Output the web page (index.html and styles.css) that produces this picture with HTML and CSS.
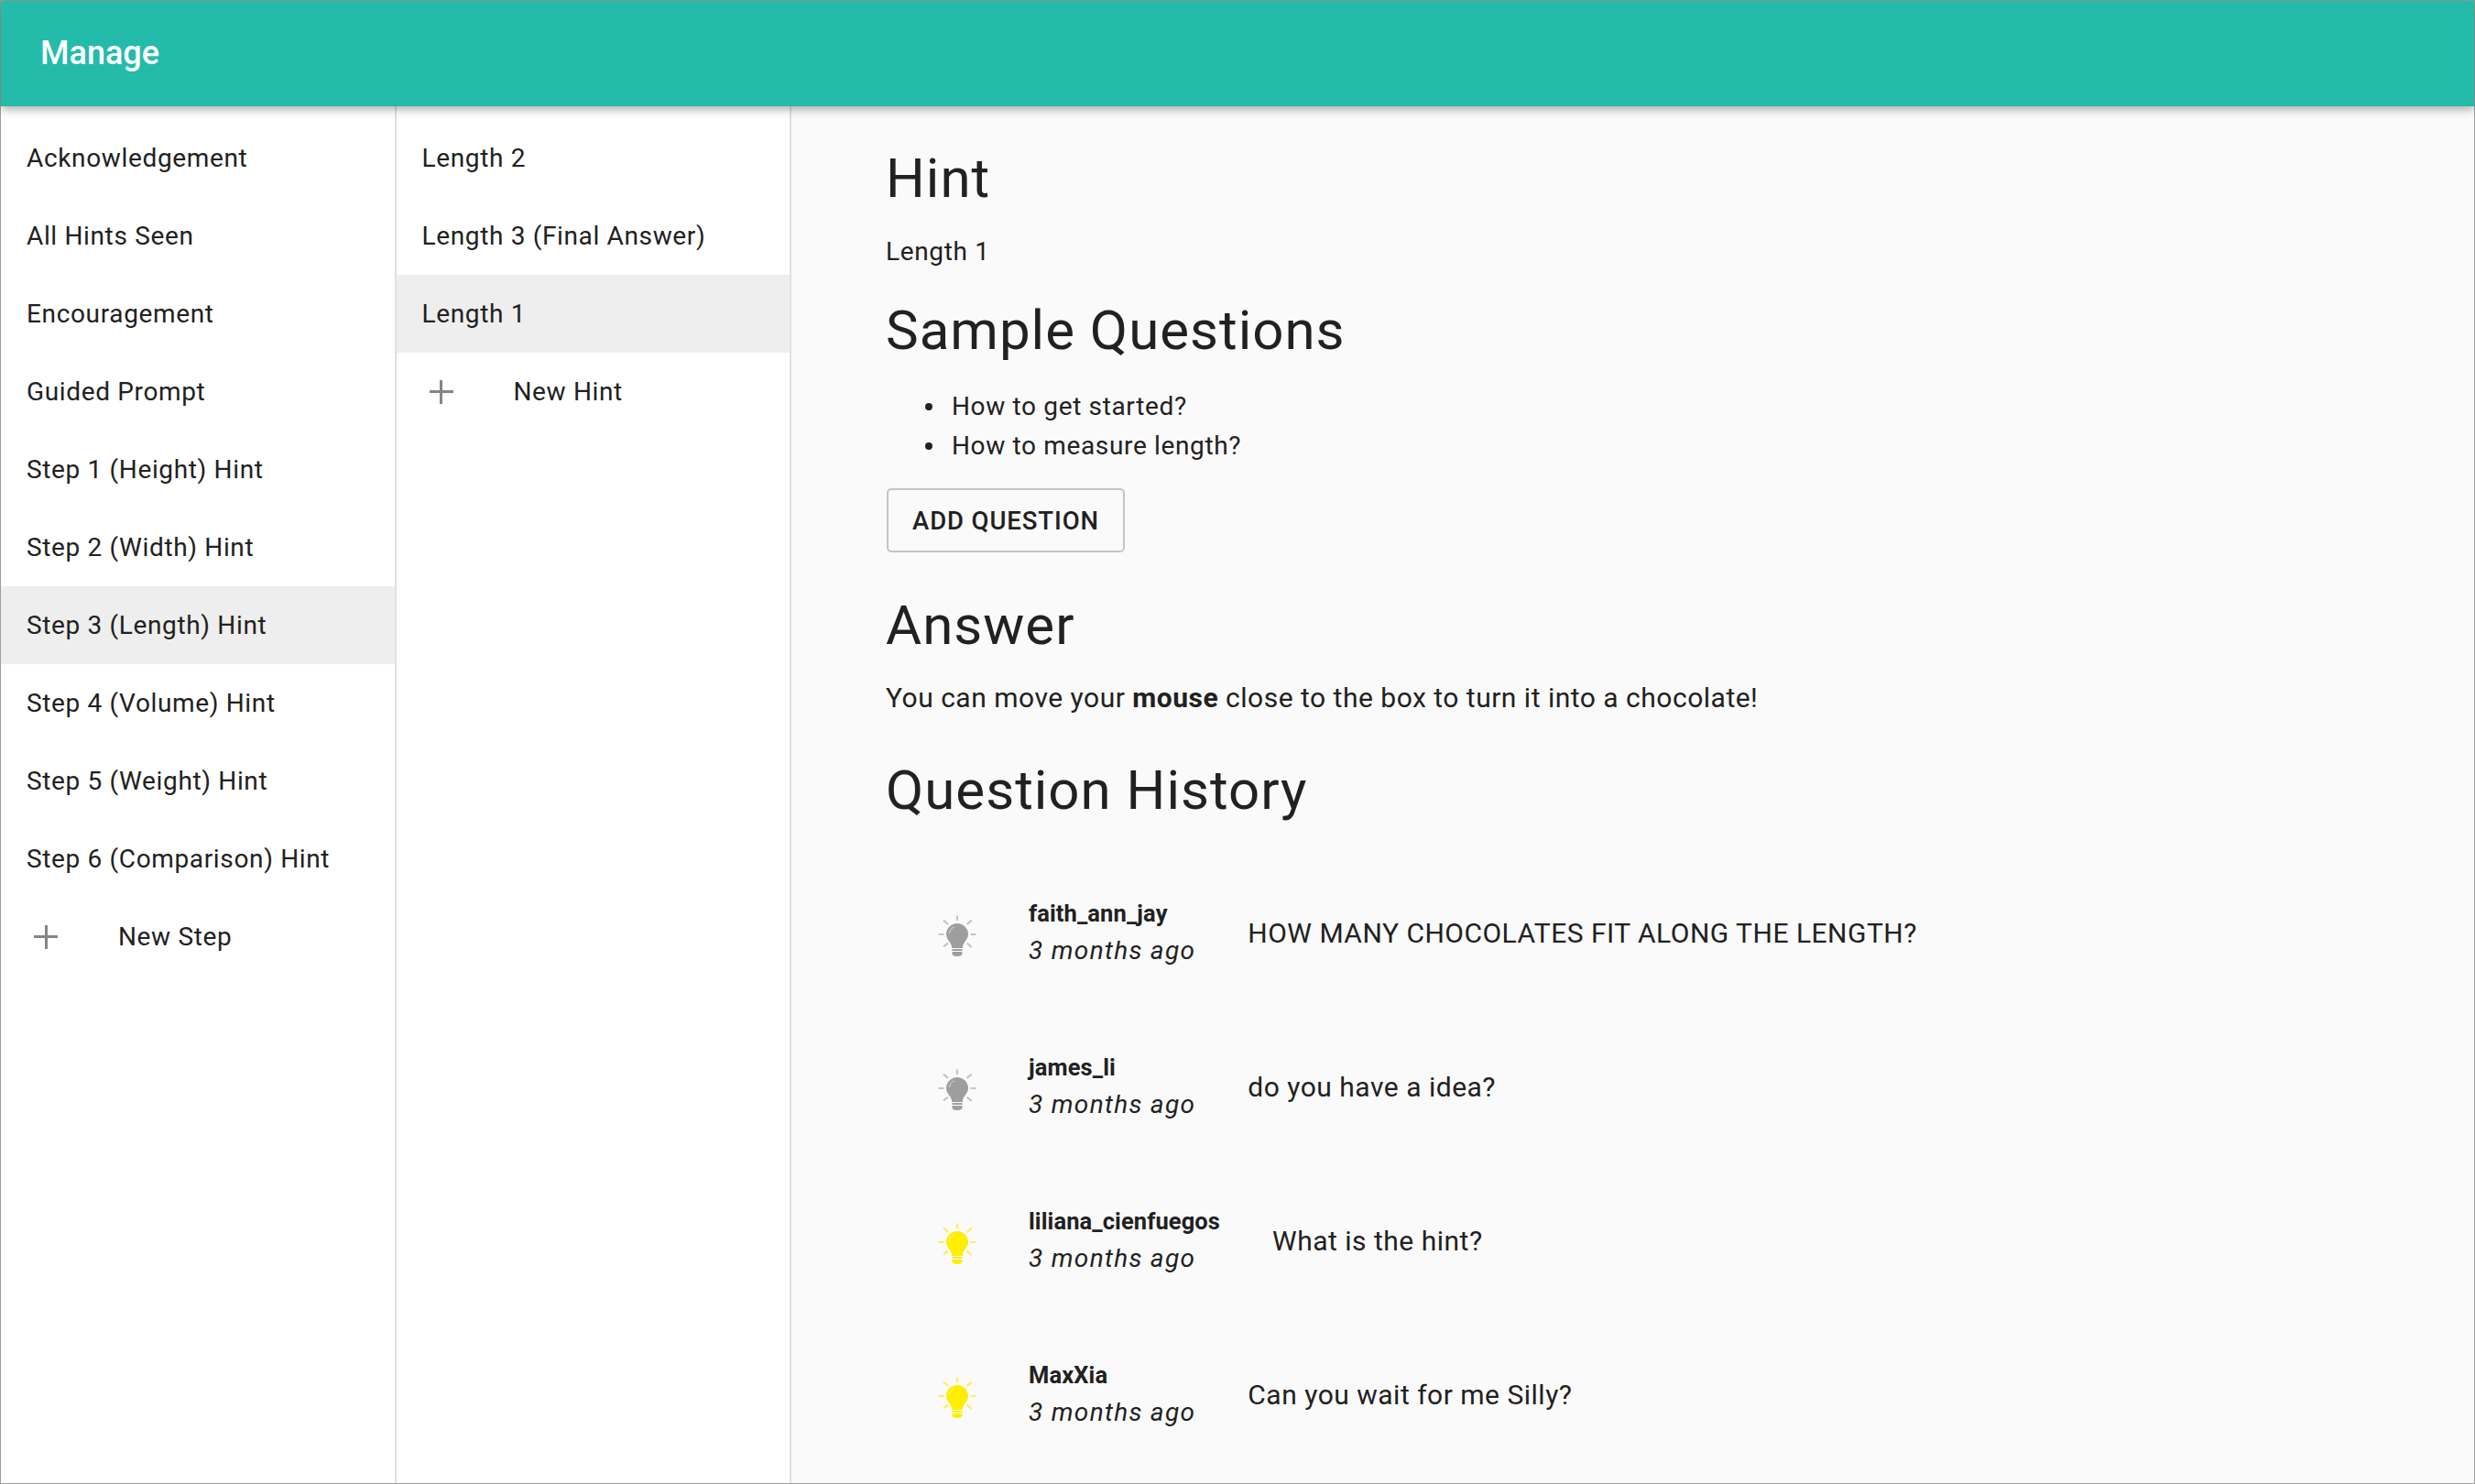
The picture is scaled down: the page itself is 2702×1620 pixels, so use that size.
FILE: index.html
```html
<!DOCTYPE html>
<html lang="en">
<head>
  <meta charset="UTF-8">
  <title>Manage</title>
  <link rel="stylesheet" href="styles.css">
</head>
<body>
  <svg class="defs">
    <symbol id="bulb" viewBox="0 0 42 46">
      <path class="rays" d="M21 0.500v5.500M0.500 21h6M35.500 21h6M6 5.700l5 4.300M36.700 5.700L31.700 10M6 34.300l5-3.600M36.700 35L31.700 30.700"/>
      <path class="glass" d="M21 9a12 12 0 0 1 12 12c0 5-4.500 8-6 12.500V36H15v-2.500C13.500 29 9 26 9 21A12 12 0 0 1 21 9z"/>
      <path class="shine" d="M12.500 20a8.500 8.500 0 0 1 5-7"/>
      <path class="glass" d="M15.500 37h11v2h-11zM15.500 40h11v2c0 2-2 3-5.500 3s-5.500-1-5.500-3z"/>
    </symbol>
  </svg>

  <div class="frame">
    <header class="topbar">Manage</header>

    <div class="panes">
      <nav class="pane">
        <a class="row">Acknowledgement</a>
        <a class="row">All Hints Seen</a>
        <a class="row">Encouragement</a>
        <a class="row">Guided Prompt</a>
        <a class="row">Step 1 (Height) Hint</a>
        <a class="row">Step 2 (Width) Hint</a>
        <a class="row selected">Step 3 (Length) Hint</a>
        <a class="row">Step 4 (Volume) Hint</a>
        <a class="row">Step 5 (Weight) Hint</a>
        <a class="row">Step 6 (Comparison) Hint</a>
        <a class="row add"><span class="plus"></span>New Step</a>
      </nav>

      <nav class="pane">
        <a class="row">Length 2</a>
        <a class="row">Length 3 (Final Answer)</a>
        <a class="row selected">Length 1</a>
        <a class="row add"><span class="plus"></span>New Hint</a>
      </nav>

      <main class="content">
        <h2 class="first">Hint</h2>
        <p class="hint-name">Length 1</p>

        <h2 class="samples">Sample Questions</h2>
        <ul>
          <li>How to get started?</li>
          <li>How to measure length?</li>
        </ul>
        <button class="outline">Add Question</button>

        <h2 class="answer">Answer</h2>
        <p class="answer-text">You can move your <b>mouse</b> close to the box to turn it into a chocolate!</p>

        <h2 class="history">Question History</h2>
        <div class="question">
          <svg class="icon off"><use href="#bulb"/></svg>
          <div class="meta"><b>faith_ann_jay</b><i>3 months ago</i></div>
          <span class="asked">HOW MANY CHOCOLATES FIT ALONG THE LENGTH?</span>
        </div>
        <div class="question">
          <svg class="icon off"><use href="#bulb"/></svg>
          <div class="meta"><b>james_li</b><i>3 months ago</i></div>
          <span class="asked">do you have a idea?</span>
        </div>
        <div class="question">
          <svg class="icon on"><use href="#bulb"/></svg>
          <div class="meta"><b>liliana_cienfuegos</b><i>3 months ago</i></div>
          <span class="asked">What is the hint?</span>
        </div>
        <div class="question">
          <svg class="icon on"><use href="#bulb"/></svg>
          <div class="meta"><b>MaxXia</b><i>3 months ago</i></div>
          <span class="asked">Can you wait for me Silly?</span>
        </div>
      </main>
    </div>
  </div>
</body>
</html>
```

FILE: styles.css
```css
html, body {
  margin: 0;
  height: 100%;
}
body {
  font-family: Roboto, "Liberation Sans", sans-serif;
  font-size: 28px;
  letter-spacing: 0.65px;
  color: #212121;
  overflow: hidden;
}
.defs {
  display: none;
}
.frame {
  height: 1620px;
  box-sizing: border-box;
  border: 1px solid #9e9e9e;
  display: flex;
  flex-direction: column;
  background: #fafafa;
}
.topbar {
  height: 115px;
  flex: none;
  background: #24bbaa;
  color: #fff;
  font-size: 36px;
  font-weight: 500;
  letter-spacing: 0;
  line-height: 115px;
  padding-left: 43px;
  box-shadow: 0 3px 10px rgba(0, 0, 0, 0.35);
  position: relative;
}
.panes {
  flex: 1;
  display: flex;
  min-height: 0;
}
.pane {
  width: 429.500px;
  flex: none;
  background: #fff;
  border-right: 2px solid #e0e0e0;
  padding-top: 14px;
}
.row {
  height: 85px;
  display: flex;
  align-items: center;
  padding-left: 28px;
}
.row.selected {
  background: #eeeeee;
}
.plus {
  width: 26px;
  height: 26px;
  margin: 0 66px 0 8px;
  background:
    linear-gradient(#858585, #858585) center / 100% 3px no-repeat,
    linear-gradient(#858585, #858585) center / 3px 100% no-repeat;
}
.content {
  flex: 1;
  padding-left: 103px;
}
h2 {
  font-size: 60px;
  font-weight: 400;
  line-height: 70px;
  letter-spacing: 1px;
  margin: 0;
}
.first {
  margin-top: 44px;
}
.hint-name {
  margin: 29px 0 0;
  line-height: 32px;
}
.samples {
  margin-top: 35px;
}
ul {
  margin: 26px 0 0;
  padding-left: 43px;
  list-style: none;
}
li {
  display: flex;
  align-items: center;
  line-height: 43px;
}
li::before {
  content: "";
  width: 8px;
  height: 8px;
  border-radius: 50%;
  background: #212121;
  margin-right: 21px;
}
.outline {
  display: block;
  width: 260px;
  height: 70px;
  margin: 25px 0 0 1px;
  background: transparent;
  border: 2px solid #c4c4c4;
  border-radius: 5px;
  font: 500 27.500px Roboto, sans-serif;
  letter-spacing: 0.9px;
  color: #212121;
  text-transform: uppercase;
}
.answer {
  margin-top: 45px;
}
.answer-text {
  margin: 28px 0 0;
  line-height: 32px;
  font-size: 30px;
  letter-spacing: 0.5px;
}
.history {
  margin-top: 50px;
}
.question {
  height: 168px;
  display: flex;
  align-items: center;
  padding-left: 57px;
  font-size: 30px;
  letter-spacing: 0.5px;
}
.history + .question {
  margin-top: 38px;
}
.icon {
  width: 42px;
  height: 46px;
  flex: none;
  margin: 3px 57px 0 0;
}
.off {
  --glass: #9e9e9e;
  --ray: #c4c4c4;
}
.on {
  --glass: #ffee00;
  --ray: #ffee58;
}
.rays {
  fill: none;
  stroke: var(--ray);
  stroke-width: 2.200;
}
.glass {
  fill: var(--glass);
}
.shine {
  fill: none;
  stroke: #fff;
  stroke-opacity: 0.6;
  stroke-width: 1;
}
.meta {
  display: flex;
  flex-direction: column;
  gap: 9px;
  margin: -5px 57px 0 0;
}
.meta b {
  font-size: 25.500px;
  font-weight: 700;
  letter-spacing: 0.1px;
  line-height: 32px;
}
.meta i {
  font-size: 28px;
  line-height: 32px;
  letter-spacing: 1.300px;
}
.asked {
  margin-top: -3px;
}
```
